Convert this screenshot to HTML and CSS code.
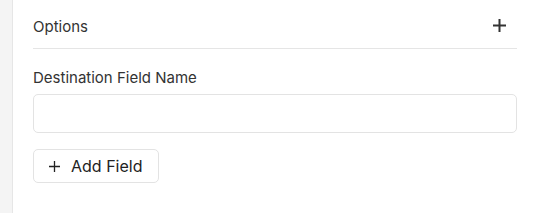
FILE: index.html
```html
<!DOCTYPE html>
<html lang="en">
<head>
  <meta charset="UTF-8" />
  <title>Options</title>
  <link rel="stylesheet" href="styles.css">
</head>
<body>
  <div class="layout">
    <div class="rail"></div>
    <div class="panel">
      <div class="panel-header">
        <span class="panel-title">Options</span>
        <button class="icon-btn" aria-label="Add option">
          <svg width="13" height="13" viewBox="0 0 13 13"><path d="M6.5 0v13M0 6.5h13" stroke="#333" stroke-width="2"/></svg>
        </button>
      </div>
      <div class="field">
        <label class="field-label" for="dest">Destination Field Name</label>
        <input class="field-input" id="dest" type="text" />
      </div>
      <button class="add-btn">
        <svg width="11" height="11" viewBox="0 0 11 11"><path d="M5.5 0v11M0 5.5h11" stroke="#222" stroke-width="1.3"/></svg>
        <span>Add Field</span>
      </button>
    </div>
  </div>
</body>
</html>
```

FILE: styles.css
```css
* { box-sizing: border-box; }
body {
  margin: 0;
  font-family: Inter, 'Noto Sans', sans-serif;
  color: #333;
  background: #fff;
}
.layout {
  display: flex;
  height: 213px;
}
.rail {
  width: 13px;
  background: #f4f4f4;
  border-right: 1px solid #e6e6e6;
}
.panel {
  flex: 1;
  padding: 0 18px 0 20px;
}
.panel-header {
  height: 49px;
  display: flex;
  align-items: center;
  justify-content: space-between;
  border-bottom: 1px solid #e5e5e5;
  padding-top: 3px;
}
.panel-title {
  font-size: 15px;
  color: #333;
  margin-top: 1px;
}
.icon-btn {
  border: none;
  background: none;
  padding: 0;
  margin-right: 11px;
  display: flex;
  cursor: pointer;
}
.field {
  display: flex;
  flex-direction: column;
  margin-top: 20px;
}
.field-label {
  font-size: 15px;
  color: #333;
  line-height: 17px;
  margin-bottom: 8px;
}
.field-input {
  height: 39px;
  border: 1px solid #e3e3e3;
  border-radius: 5px;
  font: inherit;
  padding: 0 10px;
}
.add-btn {
  margin-top: 16px;
  height: 34px;
  width: 126px;
  display: flex;
  align-items: center;
  gap: 11px;
  padding: 0 15px;
  border: 1px solid #e3e3e3;
  border-radius: 5px;
  background: #fff;
  font-family: Inter, 'Noto Sans', sans-serif;
  font-size: 16px;
  color: #222;
  cursor: pointer;
}
```
